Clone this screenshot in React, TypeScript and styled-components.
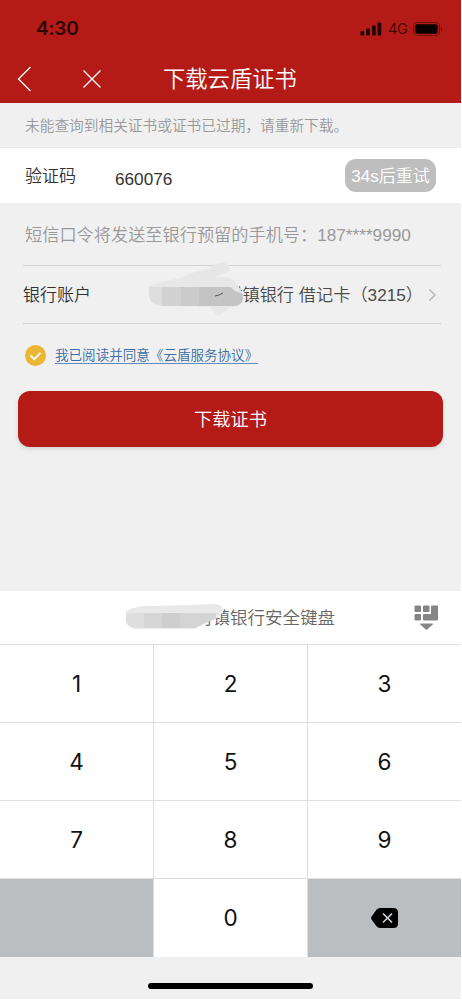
import React from "react";
import styled, { createGlobalStyle } from "styled-components";

const GlobalStyle = createGlobalStyle`
  * { box-sizing: border-box; }
  body {
    margin: 0;
    background: #fff;
    font-family: "Liberation Sans", "Noto Sans CJK SC", sans-serif;
  }
  button { font: inherit; border: 0; padding: 0; margin: 0; background: none; }
  svg { display: block; }
`;

const Screen = styled.div`
  width: 461px;
  height: 999px;
  display: flex;
  flex-direction: column;
  background: #f0f0f0;
  overflow: hidden;
`;

const Header = styled.header`
  height: 103px;
  flex: none;
  background: #b51b16;
`;

const StatusBar = styled.div`
  height: 56px;
  padding: 1px 18px 0 36px;
  display: flex;
  align-items: center;
  justify-content: space-between;
  color: #2a0503;
`;

const Clock = styled.span`
  font: 600 19px/24px Inter, sans-serif;
  letter-spacing: -0.2px;
`;

const StatusIcons = styled.div`
  display: flex;
  align-items: center;
`;

const Network = styled.span`
  width: 20px;
  margin: 0 5px 0 6px;
  font: 400 14.5px/20px Inter, sans-serif;
  letter-spacing: -0.3px;
  white-space: nowrap;
  color: #4a0805;
`;

const NavBar = styled.div`
  height: 46px;
  display: grid;
  grid-template-columns: 75px 88px auto;
  align-items: center;
`;

const NavButton = styled.button<{ $inset: number }>`
  padding-left: ${(p) => p.$inset}px;
`;

const Title = styled.h1`
  margin: 0;
  padding-top: 2px;
  font-size: 22.3px;
  line-height: 32px;
  font-weight: 350;
  color: #fff;
  white-space: nowrap;
`;

const Notice = styled.p`
  margin: 0;
  height: 45px;
  flex: none;
  padding: 1px 0 0 25px;
  font-size: 14.7px;
  line-height: 45px;
  font-weight: 350;
  color: #999;
  border-bottom: 1px solid #eaeaea;
`;

const CodeRow = styled.div`
  height: 55px;
  flex: none;
  display: flex;
  align-items: center;
  padding: 0 25px;
  background: #fff;
`;

const Label = styled.label`
  padding-top: 2px;
  font-size: 17px;
  line-height: 24px;
  font-weight: 350;
  color: #333;
  white-space: nowrap;
`;

const CodeValue = styled.span`
  margin: 7px auto 0 39px;
  font-size: 17.2px;
  line-height: 24px;
  color: #333;
`;

const Retry = styled.button`
  width: 91px;
  height: 33px;
  padding-top: 2px;
  border-radius: 11px;
  background: #bebebe;
  color: #fff;
  font-size: 17px;
  line-height: 31px;
  font-weight: 350;
  white-space: nowrap;
`;

const SmsHint = styled.p`
  margin: 0 0 0 25px;
  height: 62px;
  flex: none;
  padding-top: 1px;
  font-size: 17.2px;
  line-height: 62px;
  font-weight: 350;
  color: #999;
  white-space: nowrap;
`;

const AccountRow = styled.div`
  position: relative;
  height: 59px;
  flex: none;
  margin: 0 20px 0 23px;
  display: flex;
  align-items: center;
  border-top: 1px solid #d3d3d3;
  border-bottom: 1px solid #d3d3d3;
`;

const AccountName = styled.span`
  margin-left: auto;
  font-size: 17.2px;
  line-height: 24px;
  font-weight: 350;
  color: #4a4a4a;
  white-space: pre;
`;

const Chevron = styled.svg`
  margin: 0 4px 0 5px;
`;

const Redaction = styled.svg<{ $left: number; $top: number }>`
  position: absolute;
  left: ${(p) => p.$left}px;
  top: ${(p) => p.$top}px;
`;

const Agreement = styled.div`
  height: 67px;
  flex: none;
  padding: 0 0 5px 25px;
  display: flex;
  align-items: center;
  gap: 9px;
`;

const AgreementLink = styled.a`
  height: 18px;
  font-size: 13.55px;
  line-height: 20px;
  font-weight: 350;
  color: #3a6da3;
  border-bottom: 1px solid #5d8aba;
  white-space: nowrap;
`;

const Submit = styled.button`
  height: 56px;
  flex: none;
  margin: 0 18px;
  padding-top: 2px;
  border-radius: 12px;
  background: #b51b16;
  box-shadow: 0 2px 4px rgba(0, 0, 0, 0.12);
  color: #fff;
  font-size: 18.2px;
  line-height: 54px;
  font-weight: 350;
`;

const Keyboard = styled.section`
  margin-top: auto;
  flex: none;
`;

const KeyboardHeader = styled.div`
  position: relative;
  height: 53px;
  display: flex;
  align-items: center;
  justify-content: space-between;
  padding: 0 22px 0 195px;
  background: #fff;
`;

const KeyboardTitle = styled.span`
  font-size: 17.5px;
  line-height: 24px;
  font-weight: 350;
  color: #666;
  white-space: nowrap;
`;

const Keys = styled.div`
  display: grid;
  grid-template-columns: 153px 153px 153px;
  grid-template-rows: 77px 77px 77px 78px;
  gap: 1px;
  padding-top: 1px;
  background: #dfdfdf;
`;

const Key = styled.button<{ $muted?: boolean }>`
  display: flex;
  align-items: center;
  justify-content: center;
  background: ${(p) => (p.$muted ? "#babec1" : "#fff")};
  font: 400 22.5px/28px Inter, sans-serif;
  color: #111;
`;

const HomeArea = styled.footer`
  height: 42px;
  flex: none;
  display: flex;
  align-items: flex-end;
  justify-content: center;
  padding-bottom: 10px;
`;

const HomeIndicator = styled.div`
  width: 165px;
  height: 6px;
  border-radius: 3px;
  background: #000;
`;

export default function App() {
  return (
    <>
      <GlobalStyle />
      <Screen>
        <Header>
          <StatusBar>
            <Clock>4:30</Clock>
            <StatusIcons>
              <svg width="22" height="14" fill="#220302">
                <rect x="0.5" y="9" width="3.7" height="4.5" rx="1" />
                <rect x="6" y="6.5" width="3.7" height="7" rx="1" />
                <rect x="12" y="3.5" width="3.7" height="10" rx="1" />
                <rect x="17.5" y="0.5" width="3.7" height="13" rx="1" />
              </svg>
              <Network>4G</Network>
              <svg width="30" height="14">
                <rect x="0.5" y="0.5" width="26" height="13" rx="3.5" fill="none" stroke="#720f0b" />
                <rect x="2.3" y="2.3" width="22.4" height="9.4" rx="2" fill="#090000" />
                <path d="M28 4.5q2 2.5 0 5z" fill="#720f0b" />
              </svg>
            </StatusIcons>
          </StatusBar>
          <NavBar>
            <NavButton $inset={17} aria-label="返回">
              <svg width="16" height="26" fill="none" stroke="#fff" strokeWidth="1.3">
                <path d="M13.5 1L1.5 13l12 12" />
              </svg>
            </NavButton>
            <NavButton $inset={7} aria-label="关闭">
              <svg width="20" height="20" fill="none" stroke="#fff" strokeWidth="1.3">
                <path d="M1.5 1.5l17 17M18.5 1.5l-17 17" />
              </svg>
            </NavButton>
            <Title>下载云盾证书</Title>
          </NavBar>
        </Header>
        <Notice>未能查询到相关证书或证书已过期，请重新下载。</Notice>
        <CodeRow>
          <Label>验证码</Label>
          <CodeValue>660076</CodeValue>
          <Retry>34s后重试</Retry>
        </CodeRow>
        <SmsHint>短信口令将发送至银行预留的手机号：187****9990</SmsHint>
        <AccountRow>
          <Label>银行账户</Label>
          <AccountName>村镇银行 借记卡（3215）</AccountName>
          <Chevron width="9" height="14" fill="none" stroke="#b9b9b9" strokeWidth="1.5">
            <path d="M1.5 1.5L7 7l-5.5 5.5" />
          </Chevron>
          <Redaction $left={125} $top={-4} width="100" height="62">
            <path d="M1 24Q15 19 33 16Q48 8 61 7Q72-3 81 3L82 9L66 16Q82 13 87 20Q94 27 95 37Q94 45 82 45L70 54L61 45L15 44Q1 43 1 33Z" fill="#e7e7e7" />
            <path d="M1 25h14v19Q1 42 1 33Z" fill="#dedede" />
            <rect x="14" y="25" width="19" height="19" fill="#d2d2d2" />
            <rect x="33" y="25" width="18" height="19" fill="#cbcbcb" />
            <path d="M51 25h32q3 5 11 6q2 5 0 9q-3 4-8 4H51z" fill="#c4c4c4" />
            <path d="M67 34l4-1 4-2" stroke="#555" fill="none" />
          </Redaction>
        </AccountRow>
        <Agreement>
          <svg width="21" height="21" fill="none">
            <circle cx="10.5" cy="10.5" r="10.5" fill="#edb534" />
            <path d="M5.5 10.5l3.7 3.7 6.3-6.3" stroke="#fff" strokeWidth="1.9" />
          </svg>
          <AgreementLink>我已阅读并同意《云盾服务协议》</AgreementLink>
        </Agreement>
        <Submit>下载证书</Submit>
        <Keyboard>
          <KeyboardHeader>
            <KeyboardTitle>村镇银行安全键盘</KeyboardTitle>
            <svg width="25" height="26" fill="#858585">
              <rect x="0.5" y="0.5" width="6.5" height="6.5" rx="1" />
              <rect x="9" y="0.5" width="6.5" height="6.5" rx="1" />
              <rect x="0.5" y="9" width="6.5" height="6.5" rx="1" />
              <path d="M18 .5h5q1 0 1 1v13q0 1-1 1H10q-1 0-1-1v-4.500q0-1 1-1h7V1.500q0-1 1-1z" />
              <path d="M6.500 18.500h12q1 .3 0 1.300l-5 4.500q-1 .8-2 0l-5-4.500q-1-1 0-1.300z" />
            </svg>
            <Redaction $left={125} $top={12} width="100" height="27">
              <path d="M1 8Q12 2 32 3L91 1Q99 2 98 9Q94 16 84 18L75 23L69 26H10Q1 23 1 18Z" fill="#e9e9e9" />
              <path d="M1 10h18v15h-9Q1 23 1 18Z" fill="#dedede" />
              <rect x="19" y="10" width="18" height="15" fill="#d6d6d6" />
              <rect x="37" y="10" width="18" height="15" fill="#cecece" />
              <path d="M55 10h37l-2 6-12 5-8 4H55z" fill="#d4d4d4" />
            </Redaction>
          </KeyboardHeader>
          <Keys>
            {[1, 2, 3, 4, 5, 6, 7, 8, 9].map((n) => (
              <Key key={n}>{n}</Key>
            ))}
            <Key $muted />
            <Key>0</Key>
            <Key $muted aria-label="删除">
              <svg width="28" height="20" fill="none">
                <path d="M9 0h13.500q4.500 0 4.500 4.500v11q0 4.500-4.500 4.500H9q-2 0-3.500-1.800L.6 11.500q-.9-1.500 0-3L5.500 1.800Q7 0 9 0z" fill="#000" />
                <path d="M12 5.500l9 9M21 5.500l-9 9" stroke="#d0d3d5" strokeWidth="1.700" />
              </svg>
            </Key>
          </Keys>
        </Keyboard>
        <HomeArea>
          <HomeIndicator />
        </HomeArea>
      </Screen>
    </>
  );
}
